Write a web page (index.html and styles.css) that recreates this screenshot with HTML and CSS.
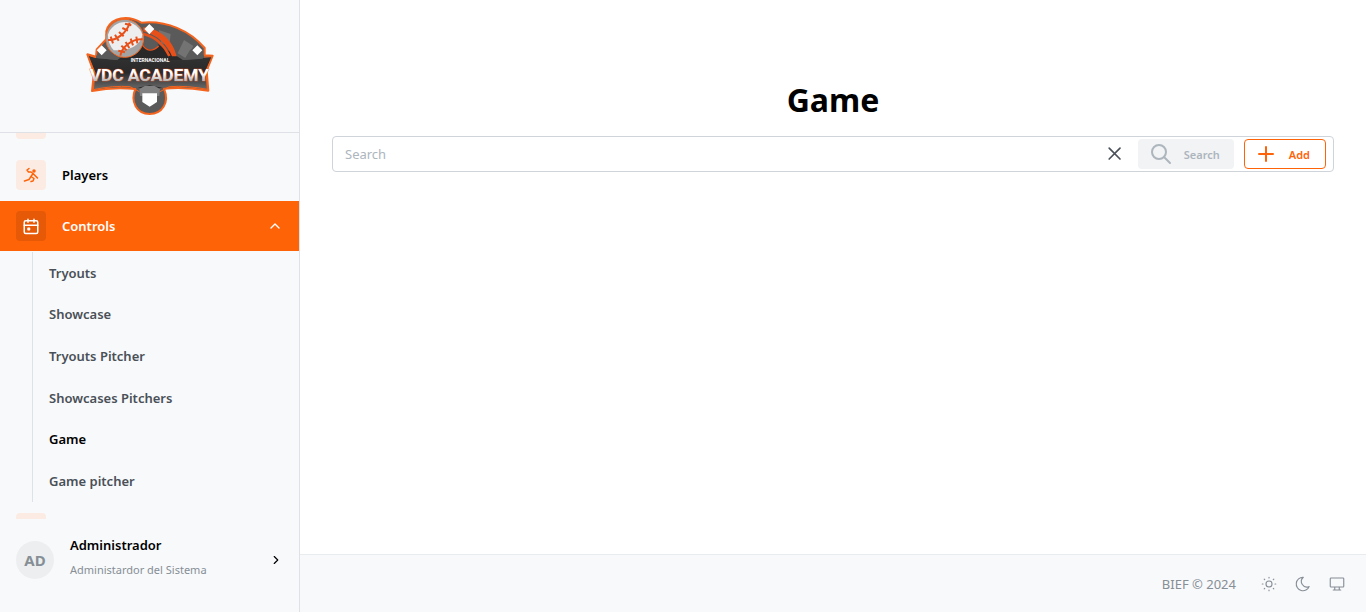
FILE: index.html
```html
<!DOCTYPE html>
<html lang="en">
<head>
    <meta charset="UTF-8">
    <meta name="viewport" content="width=device-width, initial-scale=1.0">
    <title>Game</title>
    <link rel="stylesheet" href="styles.css">
</head>
<body>
    <aside class="sidebar">
        <div class="logo">
            <svg width="140" height="110" viewBox="0 0 420 330" role="img" aria-label="VDC Academy">
                <defs>
                    <linearGradient id="letters" x1="0" y1="0" x2="0" y2="1">
                        <stop offset="0.45" stop-color="#fff"/>
                        <stop offset="0.95" stop-color="#999"/>
                    </linearGradient>
                    <linearGradient id="banner" x1="0" y1="0" x2="0" y2="1">
                        <stop offset="0" stop-color="#333"/>
                        <stop offset="0.5" stop-color="#292929"/>
                        <stop offset="1" stop-color="#6b6b6b"/>
                    </linearGradient>
                </defs>
                <!-- Field -->
                <path d="M50 118 L82 84 C70 55 95 24 137 24 C158 24 174 32 184 38 C260 30 330 62 374 114 L374 136 L398 137 L380 182 L385 242 Q315 230 252 236 C270 280 245 312 209 312 C170 312 150 275 166 237 Q100 230 36 243 L42 188 L22 133 L48 140 Z" fill="#5a5a5a" stroke="#f4641e" stroke-width="6" stroke-linejoin="round"/>
                <path d="M236 60 L272 72 L268 106 L244 100 Z M312 90 L340 108 L320 146 L293 130 Z" fill="#737373"/>
                <path d="M112 150 L205 84 L312 152 L312 198 L209 250 L112 198 Z" fill="#292929"/>
                <path d="M188 104 L194 84 Q209 76 224 84 L236 108 Q209 132 188 104 Z" fill="#5a5a5a"/>
                <path d="M188 106 Q209 134 236 108" fill="none" stroke="#e8501a" stroke-width="4"/>
                <path d="M190 52 C240 56 278 90 290 139 L276 139 C260 100 230 75 190 64 Z" fill="#e8501a"/>
                <path d="M190 72 C226 80 252 105 268 138" fill="none" stroke="#e8501a" stroke-width="8"/>
                <!-- Ball -->
                <circle cx="134" cy="85" r="57" fill="#a3a3a3" stroke="#f4641e" stroke-width="3"/>
                <path d="M84 74 A54 54 0 0 1 187 74 C180 112 140 122 101 121 Q83 99 84 74 Z" fill="#eee"/>
                <path d="M84 90 C108 92 140 70 149 38 M121 137 C126 110 155 87 188 88" fill="none" stroke="#e8501a" stroke-width="6"/>
                <path d="M92 80 l7 20 M105 74 l11 18 M117 66 l14 13 M127 54 l17 8 M135 41 l19 5 M115 122 l20 5 M124 107 l16 14 M137 96 l11 18 M152 86 l7 20 M169 80 l3 20" stroke="#e8501a" stroke-width="6"/>
                <!-- Banner -->
                <path d="M24 136 L48 144 L112 150 H312 L368 144 L396 140 L378 182 L382 238 Q300 226 240 232 L209 226 L178 232 Q110 226 40 239 L45 188 Z" fill="url(#banner)"/>
                <path d="M48 143 L24 136 L45 188 L40 239 Q100 226 150 230 L178 245 M372 141 L396 140 L378 182 L382 238 Q320 226 268 230 L240 245" fill="none" stroke="#f4641e" stroke-width="3"/>
                <path d="M48 138 L72 112 L108 138 L112 150 L48 144 Z M312 150 L330 120 L352 108 L372 138 L368 146 Z" fill="#5a5a5a"/>
                <!-- Bases -->
                <path d="M208 42 L223 57 L208 73 L193 57 Z M65 106 L80 121 L65 136 L50 121 Z M352 106 L367 121 L352 136 L337 121 Z" fill="#fff"/>
                <path d="M178 237 L194 228 H224 L240 237 L238 258 H180 Z" fill="#818181"/>
                <path d="M187 250 H231 V276 L209 290 L187 276 Z" fill="#fff"/>
                <text class="logo-small" x="210" y="156" text-anchor="middle">INTERNACIONAL</text>
                <text class="logo-name" x="208" y="212" text-anchor="middle">VDC ACADEMY</text>
            </svg>
        </div>

        <nav class="menu">
            <div class="menu-list">
                <a class="menu-item" href="#" aria-label="Home"><span class="menu-icon"></span></a>
                <a class="menu-item" href="#">
                    <span class="menu-icon">
                        <svg width="16" height="16" viewBox="0 0 16 16" fill="none" stroke="currentColor" stroke-width="1.5" stroke-linecap="round" stroke-linejoin="round">
                            <circle cx="11" cy="4" r="1" fill="currentColor"/>
                            <path d="M6 1.500 L4 3 L5.500 5 L8 5 L10 6.500 L8 9.500 L11 11.500 L10 14 M8 9.500 L6 12.500 L1.500 14 M10 6.500 L12 8.500 L14.500 11 M10 14 L8 14.500"/>
                        </svg>
                    </span>
                    Players
                </a>
                <button class="menu-item active" type="button" aria-expanded="true">
                    <span class="menu-icon">
                        <svg width="18" height="18" viewBox="0 0 24 24" fill="none" stroke="currentColor" stroke-width="2" stroke-linecap="round" stroke-linejoin="round">
                            <rect x="3" y="5" width="18" height="17" rx="2"/>
                            <path d="M16 3v4M8 3v4M3 11h18M8 15h2v2H8z"/>
                        </svg>
                    </span>
                    Controls
                    <svg class="chevron" width="16" height="16" viewBox="0 0 24 24" fill="none" stroke="currentColor" stroke-width="2" stroke-linecap="round" stroke-linejoin="round"><path d="M6 15l6-6 6 6"/></svg>
                </button>
                <div class="submenu">
                    <a href="#">Tryouts</a>
                    <a href="#">Showcase</a>
                    <a href="#">Tryouts Pitcher</a>
                    <a href="#">Showcases Pitchers</a>
                    <a class="current" href="#">Game</a>
                    <a href="#">Game pitcher</a>
                </div>
                <a class="menu-item" href="#" aria-label="Settings"><span class="menu-icon"></span></a>
            </div>
        </nav>

        <button class="user" type="button">
            <span class="avatar">AD</span>
            <span class="user-info">
                <span class="user-name">Administrador</span>
                <span class="user-role">Administardor del Sistema</span>
            </span>
            <svg class="chevron" width="14" height="14" viewBox="0 0 24 24" fill="none" stroke="currentColor" stroke-width="2" stroke-linecap="round" stroke-linejoin="round"><path d="M9 6l6 6-6 6"/></svg>
        </button>
    </aside>

    <div class="page">
        <main class="content">
            <h1>Game</h1>
            <form class="search-bar">
                <input type="text" placeholder="Search" aria-label="Search">
                <button class="clear" type="reset" aria-label="Clear">
                    <svg width="20" height="20" viewBox="0 0 24 24" fill="none" stroke="currentColor" stroke-width="2" stroke-linecap="round"><path d="M5 5l13 13M18 5L5 18"/></svg>
                </button>
                <button class="btn btn-search" type="submit" disabled>
                    <svg width="24" height="24" viewBox="0 0 24 24" fill="none" stroke="currentColor" stroke-width="2" stroke-linecap="round"><circle cx="10" cy="10" r="7"/><path d="M21 21l-6-6"/></svg>
                    Search
                </button>
                <button class="btn btn-add" type="button">
                    <svg width="24" height="24" viewBox="0 0 24 24" fill="none" stroke="currentColor" stroke-width="2" stroke-linecap="round"><path d="M12 5v14M5 12h14"/></svg>
                    Add
                </button>
            </form>
        </main>

        <footer class="footer">
            <span>BIEF © 2024</span>
            <div class="themes">
                <button type="button" aria-label="Light">
                    <svg width="18" height="18" viewBox="0 0 24 24" fill="none" stroke="currentColor" stroke-width="1.5" stroke-linecap="round"><circle cx="12" cy="12" r="4"/><path d="M3 12h1M12 3v1M20 12h1M12 20v1M5.6 5.6l.7.7M18.4 5.6l-.7.7M17.7 17.7l.7.7M6.3 17.7l-.7.7"/></svg>
                </button>
                <button type="button" aria-label="Dark">
                    <svg width="18" height="18" viewBox="0 0 24 24" fill="none" stroke="currentColor" stroke-width="1.5" stroke-linejoin="round"><path d="M12 3h.4a7.5 7.5 0 0 0 7.9 12.5A9 9 0 1 1 12 3z"/></svg>
                </button>
                <button type="button" aria-label="System">
                    <svg width="18" height="18" viewBox="0 0 24 24" fill="none" stroke="currentColor" stroke-width="1.5" stroke-linecap="round" stroke-linejoin="round"><path d="M4 4h16a1 1 0 0 1 1 1v10a1 1 0 0 1-1 1H4a1 1 0 0 1-1-1V5a1 1 0 0 1 1-1zM7 20h10M9 16v4M15 16v4"/></svg>
                </button>
            </div>
        </footer>
    </div>
</body>
</html>
```
FILE: styles.css
```css
* {
    margin: 0;
    padding: 0;
    box-sizing: border-box;
}

body {
    display: flex;
    height: 100vh;
    font-family: 'Segoe UI', 'Noto Sans', sans-serif;
    font-size: 13px;
    color: #000;
    background-color: #fff;
}

button,
input {
    font: inherit;
    border: none;
    background: none;
}

button {
    cursor: pointer;
}

a {
    color: inherit;
    text-decoration: none;
}

svg {
    display: block;
    flex-shrink: 0;
}

/* Sidebar */
.sidebar {
    display: flex;
    flex-direction: column;
    flex: 0 0 300px;
    background-color: #f8f9fb;
    border-right: 1px solid #dee2e6;
}

.logo {
    display: flex;
    justify-content: center;
    padding: 10px 0 12px;
    border-bottom: 1px solid #dee2e6;
}

.logo text {
    font-family: Roboto, 'Liberation Sans', sans-serif;
    font-weight: bold;
}

.logo-small {
    font-size: 15px;
    fill: #fff;
}

.logo-name {
    font-size: 52px;
    fill: url(#letters);
    stroke: #e8501a;
    stroke-width: 2px;
    paint-order: stroke;
}

.menu {
    flex: 1;
    min-height: 0;
    overflow: hidden;
}

.menu-list {
    display: flex;
    flex-direction: column;
    gap: 1px;
    margin-top: -34px;
}

.menu-item {
    display: flex;
    align-items: center;
    gap: 16px;
    flex-shrink: 0;
    height: 50px;
    padding: 0 16px;
    font-weight: 600;
    text-align: left;
}

.menu-icon {
    display: flex;
    align-items: center;
    justify-content: center;
    width: 30px;
    height: 30px;
    border-radius: 4px;
    color: #ff6308;
    background-color: #fbebe3;
}

.menu-item.active {
    color: #fff;
    background-color: #ff6308;
}

.active .menu-icon {
    color: #fff;
    background-color: #e65907;
}

.chevron {
    margin-left: auto;
}

.submenu {
    display: grid;
    grid-template-rows: repeat(6, 1fr);
    height: 250px;
    margin-left: 32px;
    padding-left: 16px;
    border-left: 1px solid #dee2e6;
    font-weight: 600;
    color: #495057;
}

.submenu a {
    display: flex;
    align-items: center;
}

.submenu .current {
    color: #000;
}

.user {
    display: flex;
    align-items: center;
    gap: 16px;
    height: 93px;
    padding: 0 16px 12px;
    text-align: left;
}

.avatar {
    display: flex;
    align-items: center;
    justify-content: center;
    width: 38px;
    height: 38px;
    border-radius: 50%;
    font-size: 15px;
    font-weight: 700;
    color: #868e96;
    background-color: #eceef0;
}

.user-info {
    display: flex;
    flex-direction: column;
    gap: 5px;
    padding-bottom: 5px;
}

.user-name {
    font-weight: 600;
    line-height: 20px;
}

.user-role {
    font-size: 11px;
    line-height: 20px;
    color: #868e96;
}

/* Main area */
.page {
    display: flex;
    flex-direction: column;
    flex: 1;
    min-width: 0;
}

.content {
    flex: 1;
    padding: 78px 32px 0;
}

h1 {
    margin-bottom: 14px;
    font-size: 32px;
    line-height: 44px;
    text-align: center;
}

.search-bar {
    display: flex;
    align-items: center;
    height: 36px;
    padding-right: 7px;
    border: 1px solid #ced4da;
    border-radius: 4px;
}

.search-bar input {
    flex: 1;
    min-width: 0;
    height: 100%;
    padding: 0 12px;
    outline: none;
}

.search-bar input::placeholder {
    color: #adb5bd;
}

.clear {
    margin-right: 13px;
    color: #495057;
}

.btn {
    display: flex;
    align-items: center;
    gap: 11px;
    height: 30px;
    border-radius: 4px;
    font-size: 11px;
    font-weight: 600;
}

.btn-search {
    margin-right: 10px;
    padding: 0 14px 0 11px;
    color: #adb5bd;
    background-color: #f1f3f5;
    cursor: default;
}

.btn-add {
    padding: 0 15px 0 9px;
    border: 1px solid #ff6308;
    color: #ff6308;
}

.footer {
    display: flex;
    align-items: center;
    justify-content: flex-end;
    gap: 24px;
    height: 58px;
    padding: 0 20px;
    border-top: 1px solid #e9ecef;
    color: #868e96;
    background-color: #f8f9fb;
}

.themes {
    display: flex;
    gap: 16px;
}

.themes button {
    color: #868e96;
}
```
